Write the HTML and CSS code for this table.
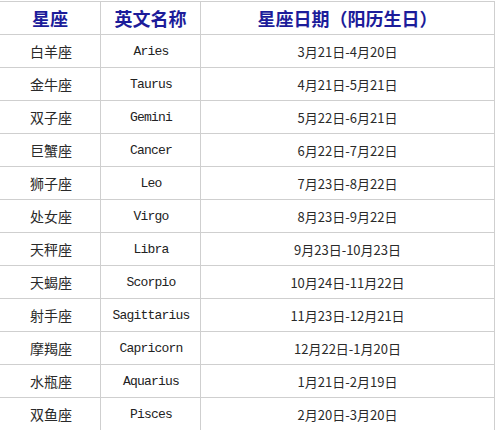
FILE: index.html
```html
<!DOCTYPE html>
<html lang="zh">
<head>
<meta charset="utf-8">
<link rel="stylesheet" href="styles.css">
</head>
<body>
<div class="table">
  <div class="cell head">星座</div><div class="cell head">英文名称</div><div class="cell head last">星座日期（阳历生日）</div>
  <div class="cell cn">白羊座</div><div class="cell en">Aries</div><div class="cell date last">3月21日-4月20日</div>
  <div class="cell cn">金牛座</div><div class="cell en">Taurus</div><div class="cell date last">4月21日-5月21日</div>
  <div class="cell cn">双子座</div><div class="cell en">Gemini</div><div class="cell date last">5月22日-6月21日</div>
  <div class="cell cn">巨蟹座</div><div class="cell en">Cancer</div><div class="cell date last">6月22日-7月22日</div>
  <div class="cell cn">狮子座</div><div class="cell en">Leo</div><div class="cell date last">7月23日-8月22日</div>
  <div class="cell cn">处女座</div><div class="cell en">Virgo</div><div class="cell date last">8月23日-9月22日</div>
  <div class="cell cn">天秤座</div><div class="cell en">Libra</div><div class="cell date last">9月23日-10月23日</div>
  <div class="cell cn">天蝎座</div><div class="cell en">Scorpio</div><div class="cell date last">10月24日-11月22日</div>
  <div class="cell cn">射手座</div><div class="cell en">Sagittarius</div><div class="cell date last">11月23日-12月21日</div>
  <div class="cell cn">摩羯座</div><div class="cell en">Capricorn</div><div class="cell date last">12月22日-1月20日</div>
  <div class="cell cn">水瓶座</div><div class="cell en">Aquarius</div><div class="cell date last">1月21日-2月19日</div>
  <div class="cell cn">双鱼座</div><div class="cell en">Pisces</div><div class="cell date last">2月20日-3月20日</div>
</div>
</body>
</html>
```
FILE: styles.css
```css
html, body {
  margin: 0;
  padding: 0;
  background: #ffffff;
}
body {
  font-family: "Noto Sans CJK SC", sans-serif;
  color: #2a2a2a;
}
.table {
  margin-top: 1px;
  width: 495px;
  display: grid;
  grid-template-columns: 101px 100px 294px;
  grid-auto-rows: 33px;
  border-top: 1px solid #cfcfcf;
}
.cell {
  box-sizing: border-box;
  border-right: 1px solid #cfcfcf;
  border-bottom: 1px solid #cfcfcf;
  display: flex;
  align-items: center;
  justify-content: center;
  white-space: nowrap;
}
.head {
  font-size: 18px;
  font-weight: 700;
  color: #1c1c9a;
  padding-bottom: 1px;
}
.cn {
  font-size: 14px;
  padding-left: 2px;
}
.en {
  font-family: "Liberation Mono", monospace;
  font-size: 13px;
  letter-spacing: -0.8px;
  color: #222222;
  padding-left: 1px;
}
.date {
  font-size: 13px;
}
```
